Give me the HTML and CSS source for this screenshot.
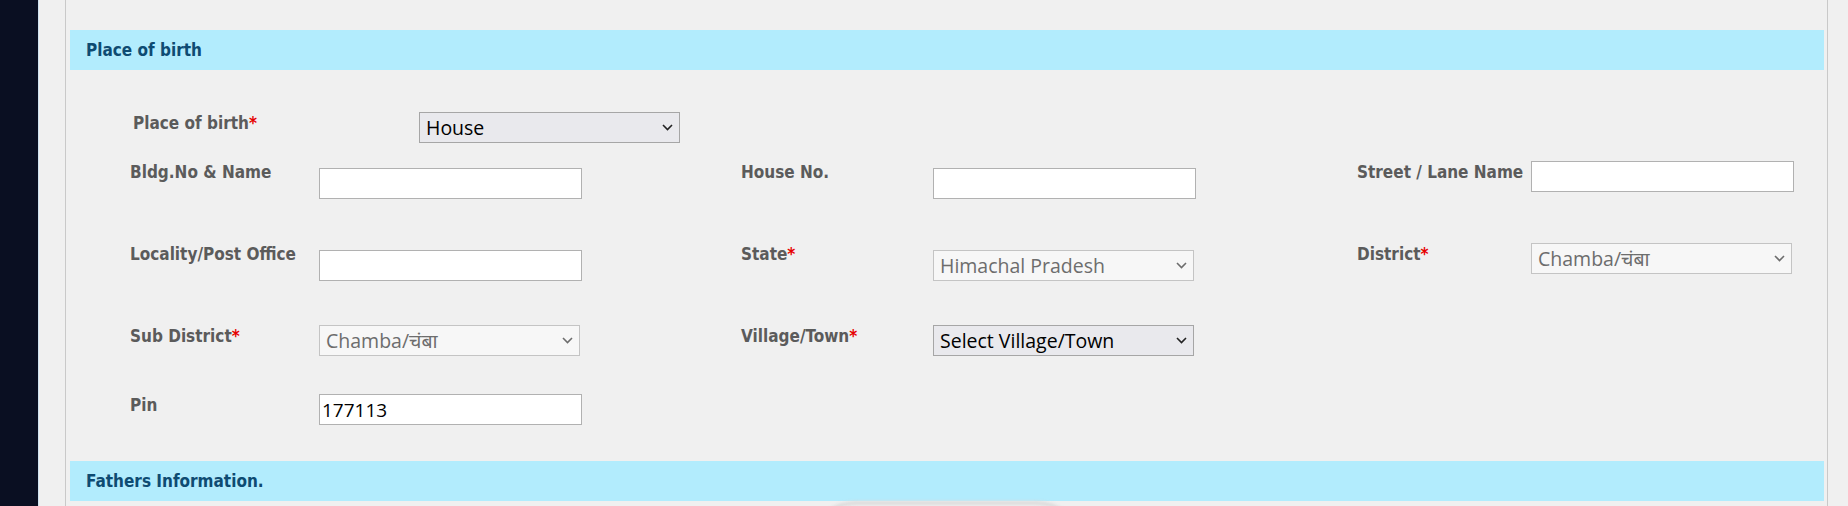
FILE: index.html
```html
<!DOCTYPE html>
<html lang="en">
<head>
<meta charset="utf-8">
<title>Place of birth</title>
<link rel="stylesheet" href="styles.css">
</head>
<body>
<div class="page">
  <aside class="sidebar"></aside>
  <main class="panel">
    <div class="section-head">Place of birth</div>

    <div class="pob-row">
      <label class="lbl lbl-pob">Place of birth<span class="req">*</span></label>
      <span class="sel-wrap">
        <select class="sel"><option>House</option></select>
        <svg class="chev" width="11" height="7" viewBox="0 0 11 7"><path d="M1 1 L5.5 5.5 L10 1" fill="none" stroke="#222" stroke-width="1.6"/></svg>
      </span>
    </div>

    <div class="form-grid">
      <label class="lbl">Bldg.No &amp; Name</label>
      <input class="txt drop" type="text">
      <label class="lbl">House No.</label>
      <input class="txt drop" type="text">
      <label class="lbl">Street / Lane Name</label>
      <input class="txt" type="text">

      <label class="lbl">Locality/Post Office</label>
      <input class="txt drop" type="text">
      <label class="lbl">State<span class="req">*</span></label>
      <span class="sel-wrap drop">
        <select class="sel" disabled><option>Himachal Pradesh</option></select>
        <svg class="chev" width="11" height="7" viewBox="0 0 11 7"><path d="M1 1 L5.5 5.5 L10 1" fill="none" stroke="#6d6d6d" stroke-width="1.6"/></svg>
      </span>
      <label class="lbl">District<span class="req">*</span></label>
      <span class="sel-wrap">
        <select class="sel" disabled><option>Chamba/चंबा</option></select>
        <svg class="chev" width="11" height="7" viewBox="0 0 11 7"><path d="M1 1 L5.5 5.5 L10 1" fill="none" stroke="#6d6d6d" stroke-width="1.6"/></svg>
      </span>

      <label class="lbl">Sub District<span class="req">*</span></label>
      <span class="sel-wrap">
        <select class="sel" disabled><option>Chamba/चंबा</option></select>
        <svg class="chev" width="11" height="7" viewBox="0 0 11 7"><path d="M1 1 L5.5 5.5 L10 1" fill="none" stroke="#6d6d6d" stroke-width="1.6"/></svg>
      </span>
      <label class="lbl">Village/Town<span class="req">*</span></label>
      <span class="sel-wrap">
        <select class="sel"><option>Select Village/Town</option></select>
        <svg class="chev" width="11" height="7" viewBox="0 0 11 7"><path d="M1 1 L5.5 5.5 L10 1" fill="none" stroke="#222" stroke-width="1.6"/></svg>
      </span>
      <span></span><span></span>

      <label class="lbl">Pin</label>
      <input class="txt" type="text" value="177113">
    </div>

    <div class="section-head section-gap">Fathers Information.</div>
    <div class="watermark"></div>
  </main>
</div>
</body>
</html>
```

FILE: styles.css
```css
* { box-sizing: border-box; }
html, body { margin: 0; padding: 0; }
body {
  background: #f0f0f0;
  font-family: "DejaVu Sans Condensed", "DejaVu Sans", sans-serif;
  overflow: hidden;
}
.page {
  display: flex;
  height: 506px;
}
.sidebar {
  width: 39px;
  flex: none;
  background: #0a0f22;
  border-right: 1px solid #cfe3f0;
}
.panel {
  position: relative;
  flex: 1;
  margin: 0 20px 0 26px;
  border-left: 1px solid #c9c9c9;
  border-right: 1px solid #c9c9c9;
  padding: 30px 3px 0 4px;
  overflow: hidden;
}
.section-head {
  height: 40px;
  line-height: 40px;
  background: #b2ecfd;
  color: #0e4b72;
  font-weight: bold;
  font-size: 17px;
  padding-left: 16px;
}
.section-gap { margin-top: 36px; }
.lbl {
  display: block;
  color: #5b5b5b;
  font-weight: bold;
  font-size: 17px;
  line-height: 20px;
  padding-top: 1px;
  white-space: nowrap;
}
.req { color: #e60000; }
.pob-row {
  display: flex;
  margin-top: 42px;
  padding-left: 63px;
  height: 31px;
}
.lbl-pob { width: 286px; }
.form-grid {
  display: grid;
  grid-template-columns: 189px 422px 192px 424px 174px 1fr;
  grid-template-rows: 82px 82px 69px 31px;
  margin: 18px 0 0 60px;
}
.txt {
  display: block;
  width: 263px;
  height: 31px;
  border: 1px solid #b1b1b1;
  background: #fff;
  font-family: "Open Sans", "Noto Sans", sans-serif;
  font-size: 19px;
  color: #000;
  padding: 0 2px;
  margin: 0;
  outline: none;
}
.drop { margin-top: 7px; }
.sel-wrap {
  position: relative;
  display: block;
  width: 261px;
  height: 31px;
}
.sel {
  -webkit-appearance: none;
  appearance: none;
  display: block;
  width: 261px;
  height: 31px;
  margin: 0;
  border: 1px solid #a6a6a6;
  border-radius: 0;
  background: #e9e9ed;
  color: #000;
  font-family: "Open Sans", "Noto Sans", "Noto Sans Devanagari", "Lohit Devanagari", "FreeSans", sans-serif;
  font-size: 19.5px;
  padding: 0 24px 0 6px;
  outline: none;
}
.sel:disabled {
  background: #f7f7f7;
  border-color: #c4c4c4;
  color: #6d6d6d;
  opacity: 1;
}
.chev {
  position: absolute;
  right: 7px;
  top: 12px;
  pointer-events: none;
}
.watermark {
  position: absolute;
  left: 740px;
  top: 501px;
  width: 280px;
  height: 120px;
  border: 4px solid #dcdcdc;
  border-radius: 50px;
  filter: blur(1.5px);
}
```
